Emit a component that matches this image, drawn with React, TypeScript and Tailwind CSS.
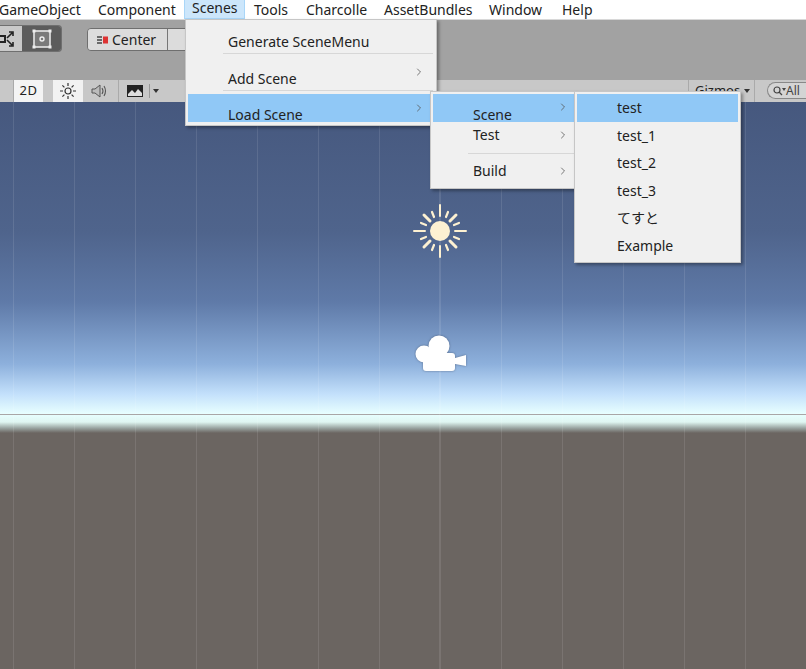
import { ChevronRight } from "lucide-react";

const font = { fontFamily: '"Noto Sans", "Noto Sans CJK JP", sans-serif' };

const gridLines = [13, 74, 135, 196, 257, 318, 379, 440, 501, 562, 623, 684, 745];

function Arrow({ className }: { className: string }) {
  return (
    <ChevronRight size={12} strokeWidth={1.6} className={`absolute text-[#555] ${className}`} />
  );
}

function MenuBar() {
  return (
    <div className="flex h-[19px] items-center overflow-hidden bg-white text-[14px] leading-[19px] text-[#222]">
      <span className="-ml-px w-[99px]">GameObject</span>
      <span className="w-[86px]">Component</span>
      <span className="h-[19px] w-[61px] border border-t-0 border-[#a9d6f8] bg-[#cce6fb] pl-[7px] leading-[15px]">Scenes</span>
      <span className="ml-[9px] w-[52px]">Tools</span>
      <span className="w-[78px]">Charcolle</span>
      <span className="w-[105px]">AssetBundles</span>
      <span className="w-[73px]">Window</span>
      <span>Help</span>
    </div>
  );
}

function Toolbar() {
  return (
    <div className="flex h-[61px] items-start border-t border-[#d8d8d8] bg-[#a2a2a2] pt-[5px]">
      <div className="flex h-[27px] w-[62px] overflow-hidden rounded-r-[4px] border border-[#6f6f6f] border-l-0">
        <div className="flex w-[22px] items-center justify-center bg-[#c9c9c9]">
          <svg width="18" height="18" viewBox="0 0 18 18" className="-ml-2 text-[#222]">
            <rect x="1" y="6" width="6" height="6" fill="none" stroke="currentColor" strokeWidth="2" />
            <path d="M9 8 14 3M11 2h4v4M9 10l5 5M11 16h4v-4" fill="none" stroke="currentColor" strokeWidth="1.6" />
          </svg>
        </div>
        <div className="flex flex-1 items-center justify-center bg-[#5c5c5c]">
          <svg width="22" height="22" viewBox="0 0 22 22">
            <rect x="3" y="3" width="16" height="16" fill="#7a7a7a" stroke="#e8e8e8" strokeWidth="1.6" />
            <rect x="1.5" y="1.5" width="3" height="3" fill="#eee" />
            <rect x="17.5" y="1.5" width="3" height="3" fill="#eee" />
            <rect x="1.5" y="17.5" width="3" height="3" fill="#eee" />
            <rect x="17.5" y="17.5" width="3" height="3" fill="#eee" />
            <circle cx="11" cy="11" r="2" fill="none" stroke="#eee" strokeWidth="1.4" />
          </svg>
        </div>
      </div>
      <div className="ml-[25px] mt-[3px] flex h-[23px] w-[115px] overflow-hidden rounded-[4px] border border-[#6f6f6f]">
        <div className="flex w-[80px] items-center gap-[3px] border-r border-[#777] bg-[#dcdcdc] pl-[9px] text-[14px] text-[#222]" style={font}>
          <svg width="12" height="10" viewBox="0 0 12 10">
            <path d="M0 2h5M0 5h5M0 8h5" stroke="#444" strokeWidth="1.4" />
            <rect x="6" y="1.5" width="5" height="7" fill="#d33" />
          </svg>
          Center
        </div>
        <div className="flex-1 bg-[#dcdcdc]" />
      </div>
    </div>
  );
}

function SceneBar() {
  return (
    <div className="flex h-[22px] items-stretch bg-[#c8c8c8] text-[13px] text-[#222]">
      <div className="w-[14px] border-r border-[#aaa]" />
      <div className="flex w-[29px] items-center justify-center bg-[#f4f4f4] tracking-wider">2D</div>
      <div className="ml-[10px] flex w-[30px] items-center justify-center bg-[#f2f2f2]">
        <svg width="16" height="16" viewBox="0 0 16 16" stroke="#333" strokeWidth="1.2" fill="none">
          <circle cx="8" cy="8" r="3" />
          <path d="M8 0v3M8 13v3M0 8h3M13 8h3M2.4 2.4l2 2M11.6 11.6l2 2M2.4 13.6l2-2M11.6 4.4l2-2" />
        </svg>
      </div>
      <div className="ml-[2px] flex w-[30px] items-center justify-center">
        <svg width="18" height="16" viewBox="0 0 18 16" fill="none">
          <path d="M1 6h3l5-4v12l-5-4H1z" fill="#bbb" stroke="#555" strokeWidth="1" />
          <path d="M11 5q2 3 0 6M13 3q3 5 0 10" stroke="#555" strokeWidth="1.1" />
        </svg>
      </div>
      <div className="ml-[3px] flex w-[47px] items-center gap-[6px] border-l border-[#aaa] pl-[8px]">
        <svg width="16" height="12" viewBox="0 0 16 12">
          <rect width="16" height="12" fill="#222" />
          <path d="M1 9 5 5l3 3 3-4 4 4v3H1z" fill="#ddd" />
        </svg>
        <span className="h-[14px] border-l border-[#999]" />
        <span className="-ml-[3px] h-0 w-0 border-x-[3px] border-t-[4px] border-x-transparent border-t-[#333]" />
      </div>
      <div className="ml-[523px] flex w-[67px] items-center gap-[4px] border-x border-[#aaa] pl-[6px]" style={font}>
        <span className="text-[13px]">Gizmos</span>
        <span className="h-0 w-0 border-x-[3px] border-t-[4px] border-x-transparent border-t-[#333]" />
      </div>
      <div className="ml-[12px] mt-[2px] flex h-[17px] flex-1 items-center rounded-l-full border border-r-0 border-[#888] bg-[#d4d4d4] pl-[4px] text-[12px] text-[#444]" style={font}>
        <svg width="14" height="12" viewBox="0 0 14 12" fill="none" stroke="#444" strokeWidth="1.2">
          <circle cx="5" cy="5" r="3" />
          <path d="M7 7l3 3" />
          <path d="M10 3h4l-2 3z" fill="#444" stroke="none" />
        </svg>
        All
      </div>
    </div>
  );
}

function Viewport() {
  return (
    <div
      className="relative flex-1 overflow-hidden"
      style={{
        background:
          "linear-gradient(#46587e 0px, #4f648c 130px, #5f7aa8 200px, #8db0dc 262px, #c3e0fb 292px, #e8ffff 312px, #dff6f2 320px, #9aa5a2 326px, #6b6561 331px, #6b6561 100%)",
      }}
    >
      {gridLines.map((x) => (
        <div
          key={x}
          className="absolute inset-y-0 w-px bg-white/10"
          style={{ left: x }}
        />
      ))}
      <div className="absolute inset-x-0 top-[312px] h-px bg-[#a9a6a6]" />
      <div className="absolute inset-y-0 left-[439px] w-px bg-white/10" />

      {/* sun gizmo */}
      <svg width="58" height="58" viewBox="0 0 58 58" className="absolute left-[411px] top-[100px]">
        <g stroke="#fdf1d2" strokeLinecap="round">
          <circle cx="29" cy="29" r="10" fill="#fdf1d2" stroke="none" />
          <path strokeWidth="2" d="M29 3v11M29 44v11M3 29h11M44 29h11" />
          <path strokeWidth="3" d="M13 13l6 6M45 13l-6 6M13 45l6-6M45 45l-6-6" />
          <path strokeWidth="2.2" d="M21 10l2 5M37 10l-2 5M21 48l2-5M37 48l-2-5M10 21l5 2M10 37l5-2M48 21l-5 2M48 37l-5-2" />
        </g>
      </svg>

      {/* camera gizmo */}
      <svg width="54" height="40" viewBox="0 0 54 40" className="absolute left-[414px] top-[232px]">
        <g fill="#fff" style={{ filter: "drop-shadow(0 0 1px rgba(40,50,70,.5))" }}>
          <circle cx="10" cy="20" r="8.5" />
          <circle cx="25" cy="12" r="10.5" />
          <rect x="9" y="19" width="32" height="18" rx="3" />
          <path d="M41 24l11-3v11l-11-2z" />
        </g>
      </svg>
    </div>
  );
}

function Menus() {
  const row = "absolute flex items-center text-[14px] leading-none text-[#222]";
  return (
    <div style={font}>
      <div className="absolute left-[185px] top-[19px] h-[107px] w-[252px] border border-[#c6c6c6] bg-[#f0f0f0] shadow-[2px_2px_3px_rgba(0,0,0,0.35)]">
        <span className={`${row} left-[42px] top-[15px]`}>Generate SceneMenu</span>
        <div className="absolute left-[37px] right-[3px] top-[33px] h-px bg-[#d7d7d7]" />
        <span className={`${row} left-[42px] top-[52px]`}>Add Scene</span>
        <Arrow className="left-[227px] top-[46px]" />
        <div className="absolute left-[37px] right-[3px] top-[70px] h-px bg-[#d7d7d7]" />
        <div className="absolute left-[2px] right-[2px] top-[74px] h-[28px] bg-[#90c8f6]" />
        <span className={`${row} left-[42px] top-[88px]`}>Load Scene</span>
        <Arrow className="left-[227px] top-[82px]" />
      </div>

      <div className="absolute left-[430px] top-[91px] h-[98px] w-[146px] border border-[#c6c6c6] bg-[#f0f0f0] shadow-[2px_2px_3px_rgba(0,0,0,0.35)]">
        <div className="absolute left-[2px] right-0 top-[2px] h-[28px] bg-[#90c8f6]" />
        <span className={`${row} left-[42px] top-[16px] -translate-y-0`}>Scene</span>
        <Arrow className="left-[126px] top-[9px]" />
        <span className={`${row} left-[42px] top-[36px]`}>Test</span>
        <Arrow className="left-[126px] top-[37px]" />
        <div className="absolute left-[37px] right-0 top-[61px] h-px bg-[#d7d7d7]" />
        <span className={`${row} left-[42px] top-[72px]`}>Build</span>
        <Arrow className="left-[126px] top-[73px]" />
      </div>

      <div className="absolute left-[574px] top-[91px] flex h-[172px] w-[167px] flex-col border border-[#c6c6c6] bg-[#f0f0f0] px-[2px] py-[2px] shadow-[2px_2px_3px_rgba(0,0,0,0.35)]">
        {["test", "test_1", "test_2", "test_3", "てすと", "Example"].map((label, i) => (
          <div
            key={label}
            className={`flex h-[27.5px] shrink-0 items-center pl-[40px] text-[14px] text-[#222] ${i === 0 ? "bg-[#90c8f6]" : ""}`}
          >
            {label}
          </div>
        ))}
      </div>
    </div>
  );
}

export default function App() {
  return (
    <div className="relative flex h-[669px] w-[806px] flex-col overflow-hidden" style={font}>
      <MenuBar />
      <Toolbar />
      <SceneBar />
      <Viewport />
      <Menus />
    </div>
  );
}
